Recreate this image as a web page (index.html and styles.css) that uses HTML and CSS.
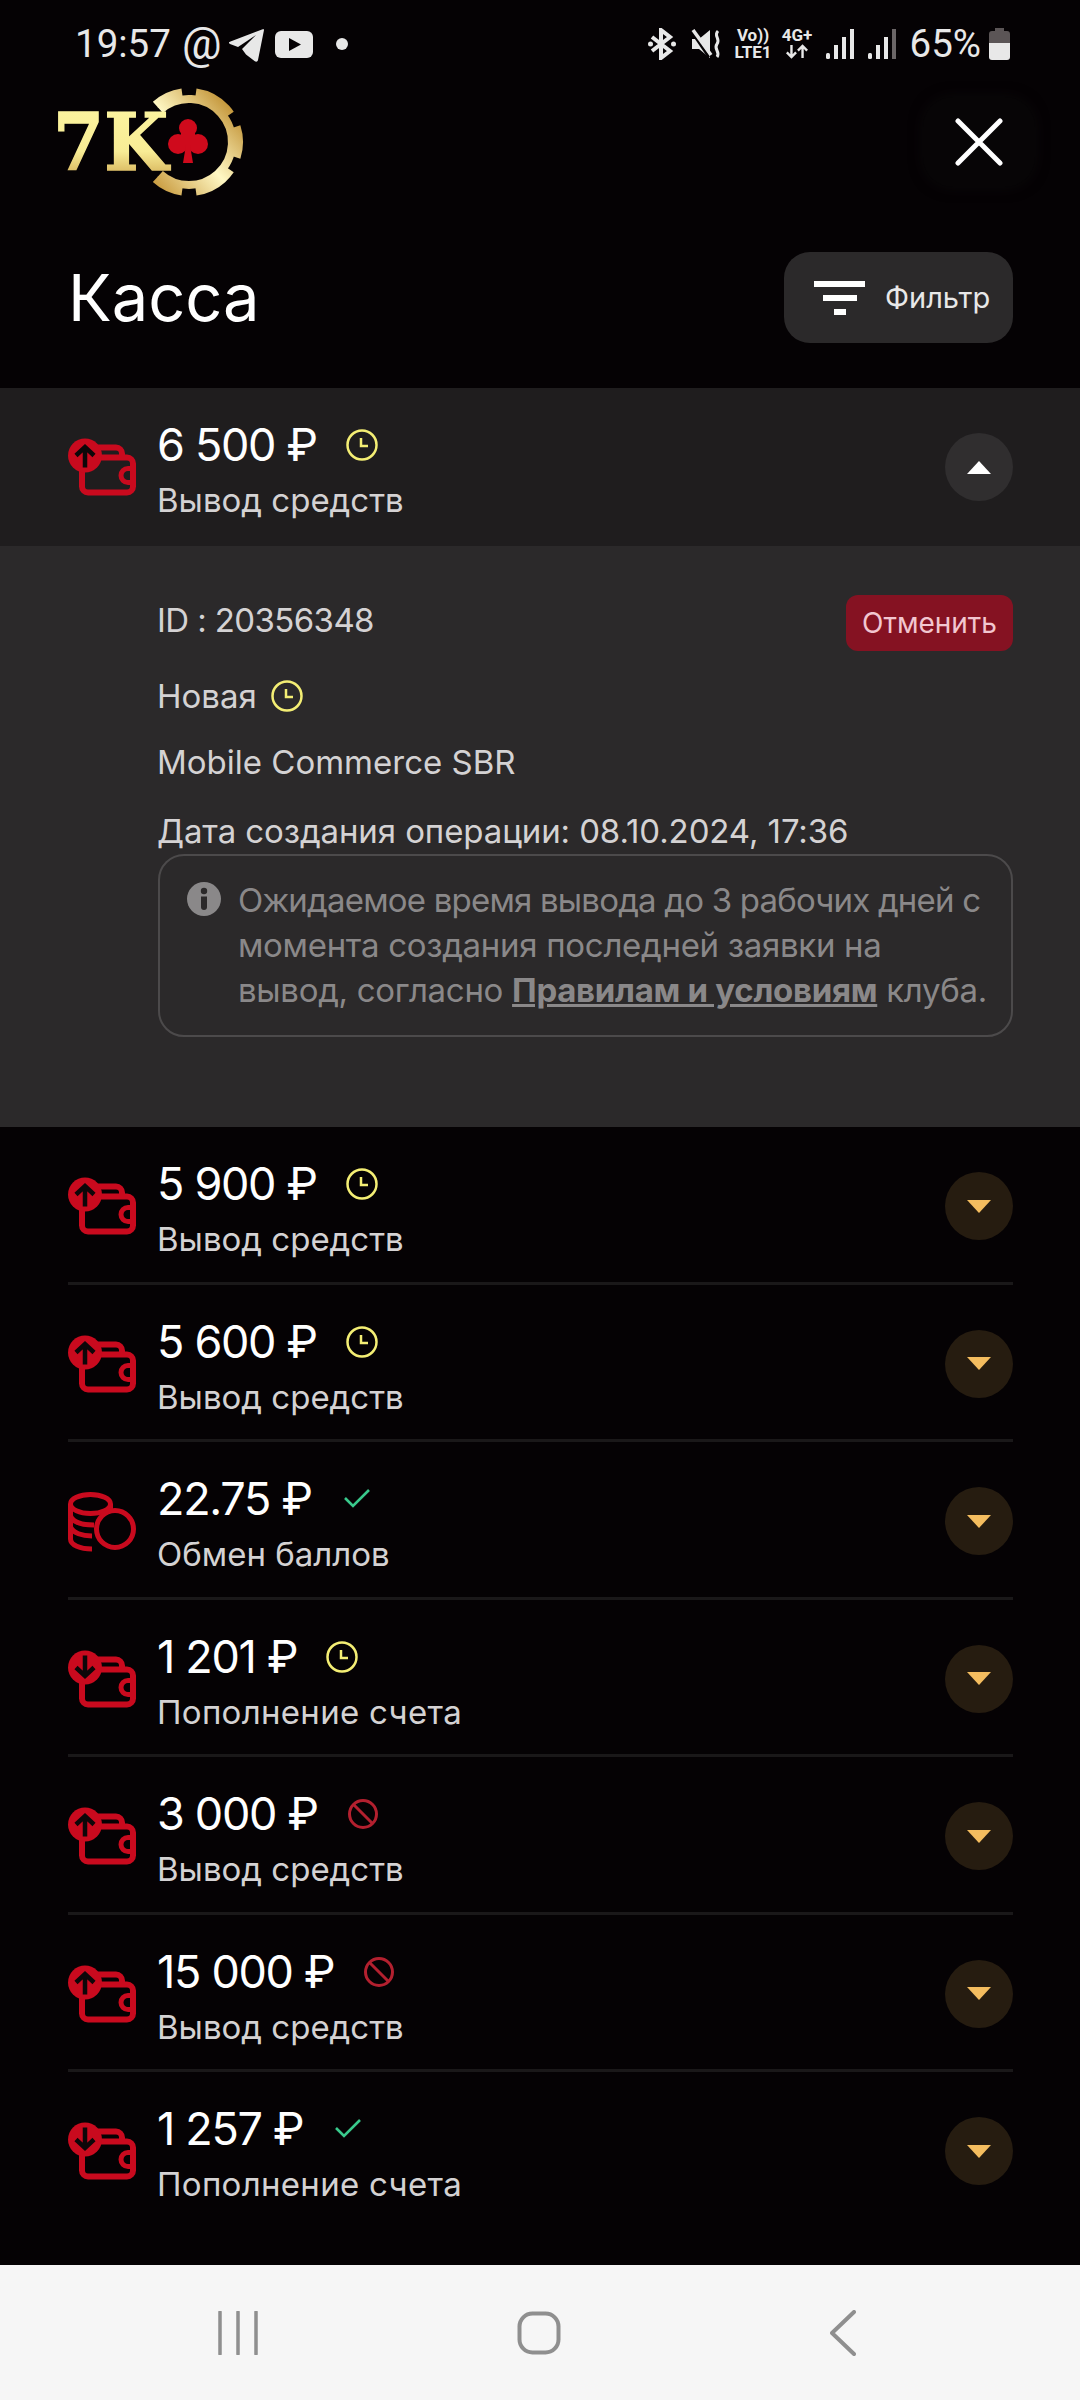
FILE: index.html
```html
<!DOCTYPE html>
<html lang="ru">
<head>
    <meta charset="utf-8">
    <title>Касса</title>
    <link rel="stylesheet" href="styles.css">
</head>

<body>
    <!-- shared icons -->
    <svg class="defs" width="0" height="0">
        <symbol id="wallet-up" viewBox="0 0 68 57">
            <rect x="14" y="19" width="51" height="35" rx="6" fill="none" stroke="#c90a1e" stroke-width="6"/>
            <path d="M28 9H48a6 6 0 0 1 6 6V19" fill="none" stroke="#c90a1e" stroke-width="6"/>
            <path d="M66 30H60a7 7 0 0 0 0 14H66" fill="none" stroke="#c90a1e" stroke-width="5"/>
            <circle cx="17" cy="17" r="17" fill="#c90a1e"/>
            <path d="M17 29V9M8 17L17 8.500L26 17" fill="none" stroke="#0d0709" stroke-width="4.500"/>
        </symbol>
        <symbol id="wallet-down" viewBox="0 0 68 57">
            <rect x="14" y="19" width="51" height="35" rx="6" fill="none" stroke="#c90a1e" stroke-width="6"/>
            <path d="M28 9H48a6 6 0 0 1 6 6V19" fill="none" stroke="#c90a1e" stroke-width="6"/>
            <path d="M66 30H60a7 7 0 0 0 0 14H66" fill="none" stroke="#c90a1e" stroke-width="5"/>
            <circle cx="17" cy="17" r="17" fill="#c90a1e"/>
            <path d="M17 5V25M8 17L17 25.500L26 17" fill="none" stroke="#0d0709" stroke-width="4.500"/>
        </symbol>
        <symbol id="coins" viewBox="0 0 68 60">
            <g fill="none" stroke="#c90a1e" stroke-width="5">
                <ellipse cx="22.500" cy="12" rx="20" ry="9.500"/>
                <path d="M2.500 12V47C2.500 53 12 57 24 57"/>
                <path d="M2.500 24C5 30 14 33 26 33M2.500 35C5 41 14 44 24 44"/>
                <path d="M42.500 12V18"/>
                <circle cx="47" cy="37" r="18.500" fill="#050204"/>
            </g>
        </symbol>
        <symbol id="clock" viewBox="0 0 32 32">
            <circle cx="16" cy="16" r="14.500" fill="none" stroke="#f4ee74" stroke-width="2.500"/>
            <path d="M15 9V17H22" fill="none" stroke="#f4ee74" stroke-width="2.500"/>
        </symbol>
        <symbol id="check" viewBox="0 0 32 32">
            <path d="M4 15L12 23L28 7" fill="none" stroke="#39c98c" stroke-width="2.600"/>
        </symbol>
        <symbol id="ban" viewBox="0 0 32 32">
            <circle cx="16" cy="16" r="13.500" fill="none" stroke="#b3202f" stroke-width="3"/>
            <path d="M6.500 6.500L25.500 25.500" stroke="#b3202f" stroke-width="3"/>
        </symbol>
    </svg>

    <div class="phone">
        <div class="status">
            <span class="time">19:57</span>
            <span class="at">@</span>
            <svg class="ic-telegram" viewBox="0 0 36 33"><path d="M35 1L29 31C28.500 33 27 33 25.500 32L17 25.500L13 20L27 6L9 18L1 15C-0.500 14 -0.500 13 1.500 12.500L33 0.500C34.500 0 35.300 0 35 1Z" fill="#e8e8e8"/></svg>
            <svg class="ic-youtube" viewBox="0 0 38 27"><rect width="38" height="27" rx="6" fill="#e8e8e8"/><path d="M14 7L26 13.500L14 20Z" fill="#050204"/></svg>
            <span class="dot"></span>
            <span class="status-right">
                <svg class="ic-bt" viewBox="0 0 28 32"><g fill="none" stroke="#e8e8e8" stroke-width="4"><path d="M4 9L22 23L13 30V2L22 9L4 23"/></g><circle cx="2.500" cy="16" r="2.500" fill="#e8e8e8"/><circle cx="25.500" cy="16" r="2.500" fill="#e8e8e8"/></svg>
                <svg class="ic-mute" viewBox="0 0 30 30"><path d="M1 10H8L19 1V29L8 20H1Z" fill="#e8e8e8"/><path d="M1 3L18 28" stroke="#050204" stroke-width="3"/><path d="M2 1L20 26" stroke="#e8e8e8" stroke-width="3.500"/><path d="M27 2C22 7 30 10 26 15C22 20 30 23 26 28" fill="none" stroke="#e8e8e8" stroke-width="3"/></svg>
                <span class="net net-volte"><span>Vo))</span><span>LTE1</span></span>
                <span class="net net-4g"><span>4G+</span><svg class="net-arrows" viewBox="0 0 26 16"><path d="M7 1V14M2 9L7 14L12 9M19 15V2M14 7L19 2L24 7" fill="none" stroke="#e8e8e8" stroke-width="2.600"/></svg></span>
                <svg class="ic-signal" viewBox="0 0 28 30"><rect x="0" y="24" width="4" height="6" rx="1.500" fill="#e8e8e8"/><rect x="8" y="16" width="4" height="14" fill="#e8e8e8"/><rect x="16" y="8" width="4" height="22" fill="#e8e8e8"/><rect x="24" y="0" width="4" height="30" fill="#e8e8e8"/></svg>
                <svg class="ic-signal ic-signal-two" viewBox="0 0 28 30"><rect x="0" y="24" width="4" height="6" rx="1.500" fill="#e8e8e8"/><rect x="8" y="16" width="4" height="14" fill="#e8e8e8"/><rect x="16" y="8" width="4" height="22" fill="#e8e8e8"/><rect x="24" y="0" width="4" height="30" fill="#6b6667"/></svg>
                <span class="pct">65%</span>
                <svg class="ic-battery" viewBox="0 0 21 32"><path d="M6 0H15V3H18a3 3 0 0 1 3 3V15H0V6a3 3 0 0 1 3-3H6Z" fill="#5b5556"/><path d="M0 15H21V29a3 3 0 0 1-3 3H3a3 3 0 0 1-3-3Z" fill="#e8e8e8"/></svg>
            </span>
        </div>

        <div class="top">
            <svg class="logo" viewBox="0 0 190 110" width="190" height="110">
                <defs>
                    <linearGradient id="gold" x1="0" y1="0" x2="0" y2="1">
                        <stop offset="0" stop-color="#fdf6a2"/>
                        <stop offset="0.6" stop-color="#f8ec95"/>
                        <stop offset="1" stop-color="#c6983f"/>
                    </linearGradient>
                    <linearGradient id="ring" gradientUnits="userSpaceOnUse" x1="132" y1="0" x2="132" y2="110">
                        <stop offset="0" stop-color="#c99b3f"/>
                        <stop offset="0.5" stop-color="#fff8c4"/>
                        <stop offset="1" stop-color="#c4963a"/>
                    </linearGradient>
                </defs>
                <circle class="ring-base" cx="132" cy="55" r="43" pathLength="360" transform="rotate(-132 132 55)"/>
                <circle class="ring-teeth" cx="132" cy="55" r="50" pathLength="360" transform="rotate(-132 132 55)"/>
                <text class="logo-text" x="-4" y="83" textLength="115" lengthAdjust="spacingAndGlyphs">7K</text>
                <g fill="#cf0a1c">
                    <circle cx="131" cy="41" r="9"/>
                    <circle cx="121" cy="57" r="10"/>
                    <circle cx="141" cy="57" r="10"/>
                    <rect x="124" y="44" width="14" height="14"/>
                    <path d="M129 58H133L136 76H126Z"/>
                </g>
            </svg>
            <button class="close-btn">
                <svg viewBox="0 0 48 48" width="48" height="48"><path d="M3 3L45 45M45 3L3 45" stroke="#fff" stroke-width="5" stroke-linecap="round"/></svg>
            </button>
        </div>

        <div class="title-row">
            <h1 class="title">Касса</h1>
            <button class="filter-btn">
                <span class="filter-ic"><i></i><i></i><i></i></span>
                <span>Фильтр</span>
            </button>
        </div>

        <div class="row row-open">
            <svg class="row-icon"><use href="#wallet-up"/></svg>
            <div class="row-text">
                <div class="amount">6 500 ₽<svg class="state"><use href="#clock"/></svg></div>
                <div class="sub">Вывод средств</div>
            </div>
            <span class="toggle toggle-open"></span>
        </div>
        <div class="details">
            <div class="id-line">
                <span>ID : 20356348</span>
                <button class="cancel-btn">Отменить</button>
            </div>
            <div class="line line-state">Новая<svg class="state state-small"><use href="#clock"/></svg></div>
            <div class="line line-bank">Mobile Commerce SBR</div>
            <div class="line line-date">Дата создания операции: 08.10.2024, 17:36</div>
            <div class="note">
                <svg class="note-ic" viewBox="0 0 34 34"><circle cx="17" cy="17" r="17" fill="#8a8889"/><circle cx="17" cy="9" r="3.200" fill="#2b292a"/><path d="M14 14.500H20V25a3 3 0 0 1-6 0Z" fill="#2b292a"/></svg>
                <p><span class="note-first">Ожидаемое время вывода до 3 рабочих дней с</span><br>момента создания последней заявки на<br>вывод, согласно <a href="#">Правилам и условиям</a> клуба.</p>
            </div>
        </div>

        <div class="list">
            <div class="row">
                <svg class="row-icon"><use href="#wallet-up"/></svg>
                <div class="row-text">
                    <div class="amount">5 900 ₽<svg class="state"><use href="#clock"/></svg></div>
                    <div class="sub">Вывод средств</div>
                </div>
                <span class="toggle"></span>
            </div>
            <div class="row">
                <svg class="row-icon"><use href="#wallet-up"/></svg>
                <div class="row-text">
                    <div class="amount">5 600 ₽<svg class="state"><use href="#clock"/></svg></div>
                    <div class="sub">Вывод средств</div>
                </div>
                <span class="toggle"></span>
            </div>
            <div class="row">
                <svg class="row-icon row-icon-coins"><use href="#coins"/></svg>
                <div class="row-text">
                    <div class="amount">22.75 ₽<svg class="state"><use href="#check"/></svg></div>
                    <div class="sub">Обмен баллов</div>
                </div>
                <span class="toggle"></span>
            </div>
            <div class="row">
                <svg class="row-icon"><use href="#wallet-down"/></svg>
                <div class="row-text">
                    <div class="amount">1 201 ₽<svg class="state"><use href="#clock"/></svg></div>
                    <div class="sub sub-wide">Пополнение счета</div>
                </div>
                <span class="toggle"></span>
            </div>
            <div class="row">
                <svg class="row-icon"><use href="#wallet-up"/></svg>
                <div class="row-text">
                    <div class="amount">3 000 ₽<svg class="state"><use href="#ban"/></svg></div>
                    <div class="sub">Вывод средств</div>
                </div>
                <span class="toggle"></span>
            </div>
            <div class="row">
                <svg class="row-icon"><use href="#wallet-up"/></svg>
                <div class="row-text">
                    <div class="amount">15 000 ₽<svg class="state"><use href="#ban"/></svg></div>
                    <div class="sub">Вывод средств</div>
                </div>
                <span class="toggle"></span>
            </div>
            <div class="row row-last">
                <svg class="row-icon"><use href="#wallet-down"/></svg>
                <div class="row-text">
                    <div class="amount">1 257 ₽<svg class="state"><use href="#check"/></svg></div>
                    <div class="sub sub-wide">Пополнение счета</div>
                </div>
                <span class="toggle"></span>
            </div>
        </div>

        <div class="navbar">
            <svg class="nav-recent" viewBox="0 0 40 44"><path d="M2 1V43M20 1V43M38 1V43" stroke="#8f8f8f" stroke-width="3.500" stroke-linecap="round"/></svg>
            <svg class="nav-home" viewBox="0 0 44 44"><rect x="2.500" y="2.500" width="39" height="39" rx="13" fill="none" stroke="#8f8f8f" stroke-width="4"/></svg>
            <svg class="nav-back" viewBox="0 0 26 46"><path d="M24 2L2 23L24 44" fill="none" stroke="#8f8f8f" stroke-width="4" stroke-linecap="round" stroke-linejoin="round"/></svg>
        </div>
    </div>
</body>
</html>
```

FILE: styles.css
```css
* {
    box-sizing: border-box;
}

html, body {
    margin: 0;
    padding: 0;
    background: #050204;
}

.defs {
    position: absolute;
}

.phone {
    width: 1080px;
    height: 2400px;
    display: flex;
    flex-direction: column;
    background: #050204;
    font-family: Inter, "Noto Sans", sans-serif;
    color: #fff;
    overflow: hidden;
}

/* status bar */
.status {
    height: 80px;
    padding: 24px 70px 0 75px;
    display: flex;
    align-items: flex-start;
    font-family: Roboto, sans-serif;
    color: #e8e8e8;
}

.time, .pct {
    font-size: 38.500px;
    line-height: 40px;
}

.at {
    font-size: 44px;
    line-height: 40px;
    margin-left: 11px;
}

.ic-telegram {
    width: 36px;
    height: 33px;
    margin: 5px 0 0 8px;
}

.ic-youtube {
    width: 38px;
    height: 27px;
    margin: 7px 0 0 10px;
}

.dot {
    width: 12px;
    height: 12px;
    border-radius: 50%;
    background: #e8e8e8;
    margin: 14px 0 0 23px;
}

.status-right {
    margin-left: auto;
    display: flex;
    align-items: flex-start;
}

.ic-bt {
    width: 28px;
    height: 32px;
    margin-top: 4px;
}

.ic-mute {
    width: 30px;
    height: 30px;
    margin: 5px 0 0 15px;
}

.net {
    display: flex;
    flex-direction: column;
    align-items: center;
    font-weight: 700;
    font-size: 17px;
    line-height: 17px;
    margin-top: 3px;
}

.net-volte {
    width: 39px;
    margin-left: 13px;
}

.net-4g {
    width: 33px;
    margin-left: 8px;
}

.net-arrows {
    width: 24px;
    height: 15px;
}

.ic-signal {
    width: 28px;
    height: 30px;
    margin: 5px 0 0 12px;
}

.ic-signal-two {
    margin-left: 14px;
}

.pct {
    margin-left: 14px;
}

.ic-battery {
    width: 21px;
    height: 32px;
    margin: 4px 0 0 8px;
}

/* header */
.top {
    height: 124px;
    padding: 0 45px 0 57px;
    display: flex;
    align-items: center;
    justify-content: space-between;
}

.logo {
    overflow: visible;
}

.ring-base {
    fill: none;
    stroke: url(#ring);
    stroke-width: 8;
    stroke-dasharray: 264 96;
}

.ring-teeth {
    fill: none;
    stroke: url(#ring);
    stroke-width: 8;
    stroke-dasharray: 34 16 48 16 36 16 48 16 34 96;
}

.logo-text {
    font-family: "DejaVu Serif", serif;
    font-weight: 700;
    font-size: 78px;
    fill: url(#gold);
    stroke: url(#gold);
    stroke-width: 1.500px;
}

.close-btn {
    width: 112px;
    height: 90px;
    border: none;
    border-radius: 30px;
    background: #070506;
    box-shadow: 0 0 14px #0b090a;
    display: flex;
    align-items: center;
    justify-content: center;
    padding: 0;
}

.title-row {
    height: 184px;
    padding: 48px 67px 45px 68px;
    display: flex;
    align-items: center;
    justify-content: space-between;
}

.title {
    margin: 0;
    font-size: 65px;
    font-weight: 400;
    line-height: 91px;
}

.filter-btn {
    width: 229px;
    height: 91px;
    border: none;
    border-radius: 26px;
    background: #2b292a;
    color: #e8e8e8;
    font-family: Inter, sans-serif;
    font-size: 29px;
    display: flex;
    align-items: center;
    padding: 0 0 0 30px;
    gap: 20px;
}

.filter-ic {
    width: 51px;
    display: flex;
    flex-direction: column;
    align-items: center;
    gap: 8px;
}

.filter-ic i {
    display: block;
    height: 6px;
    background: #fff;
    width: 51px;
}

.filter-ic i:nth-child(2) {
    width: 34px;
}

.filter-ic i:nth-child(3) {
    width: 12px;
}

/* rows */
.row {
    height: 157.5px;
    margin: 0 67px 0 68px;
    display: flex;
    align-items: flex-start;
    border-bottom: 3px solid #1a1819;
}

.row-open {
    height: 158px;
    margin: 0;
    padding: 0 67px 0 68px;
    background: #1f1d1e;
    border-bottom: none;
    flex-shrink: 0;
}

.row-last {
    border-bottom: none;
}

.row-icon {
    width: 68px;
    height: 60px;
    margin-top: 49px;
    flex-shrink: 0;
}

.row-icon-coins {
    margin-top: 50px;
}

.row-text {
    margin-left: 21px;
    flex: 1;
    padding-top: 29px;
}

.amount {
    display: flex;
    align-items: center;
    font-size: 45px;
    line-height: 56px;
    letter-spacing: -1.300px;
    color: #fff;
    height: 56px;
}

.state {
    width: 32px;
    height: 32px;
    margin-left: 29px;
}

.sub {
    margin-top: 5px;
    font-size: 33px;
    line-height: 44px;
    color: #d4d2d3;
}

.sub-wide {
    letter-spacing: 0.300px;
}

.toggle {
    width: 68px;
    height: 68px;
    margin-top: 45px;
    border-radius: 50%;
    background: #261c10;
    display: flex;
    align-items: center;
    justify-content: center;
    flex-shrink: 0;
}

.toggle::after {
    content: "";
    border-left: 12.5px solid transparent;
    border-right: 12.5px solid transparent;
    border-top: 13px solid #f4bd5f;
}

.toggle-open {
    background: #302e2f;
}

.toggle-open::after {
    border-top: none;
    border-bottom: 13px solid #fff;
}

/* opened row */
.details {
    height: 581px;
    flex-shrink: 0;
    background: #2b292a;
    padding: 49px 67px 0 157px;
    color: #d4d2d3;
    font-size: 33px;
    line-height: 44px;
}

.id-line {
    display: flex;
    align-items: center;
    justify-content: space-between;
    height: 56px;
}

.id-line span {
    margin-top: -6px;
    letter-spacing: -0.600px;
}

.cancel-btn {
    width: 167px;
    height: 56px;
    border: none;
    border-radius: 12px;
    background: #851222;
    color: #f2c6d0;
    font-family: Inter, sans-serif;
    font-size: 28px;
    padding: 0;
}

.line {
    display: flex;
    align-items: center;
    height: 44px;
}

.line-state {
    margin-top: 23px;
}

.line-bank {
    margin-top: 22px;
}

.line-date {
    margin-top: 25px;
    letter-spacing: -0.100px;
}

.state-small {
    margin-left: 14px;
}

.note {
    margin: 1px 0 0 1px;
    height: 183px;
    border: 2px solid #4c4a4b;
    border-radius: 26px;
    padding: 22px 8px 0 27px;
    display: flex;
    align-items: flex-start;
    color: #8a8889;
}

.note-ic {
    width: 34px;
    height: 34px;
    flex-shrink: 0;
    margin-top: 4px;
}

.note p {
    margin: 0 0 0 17px;
    font-size: 33px;
    line-height: 45px;
    letter-spacing: -0.300px;
    white-space: nowrap;
}

.note-first {
    letter-spacing: -0.800px;
}

.note a {
    color: #8a8889;
    font-weight: 700;
}

.list {
    flex: 1;
    display: flex;
    flex-direction: column;
}

/* android navigation */
.navbar {
    height: 135px;
    flex-shrink: 0;
    background: #f6f6f6;
    display: flex;
    align-items: center;
    padding-left: 218px;
}

.nav-recent {
    width: 40px;
    height: 44px;
}

.nav-home {
    width: 44px;
    height: 44px;
    margin-left: 259px;
}

.nav-back {
    width: 26px;
    height: 46px;
    margin-left: 269px;
}
```
